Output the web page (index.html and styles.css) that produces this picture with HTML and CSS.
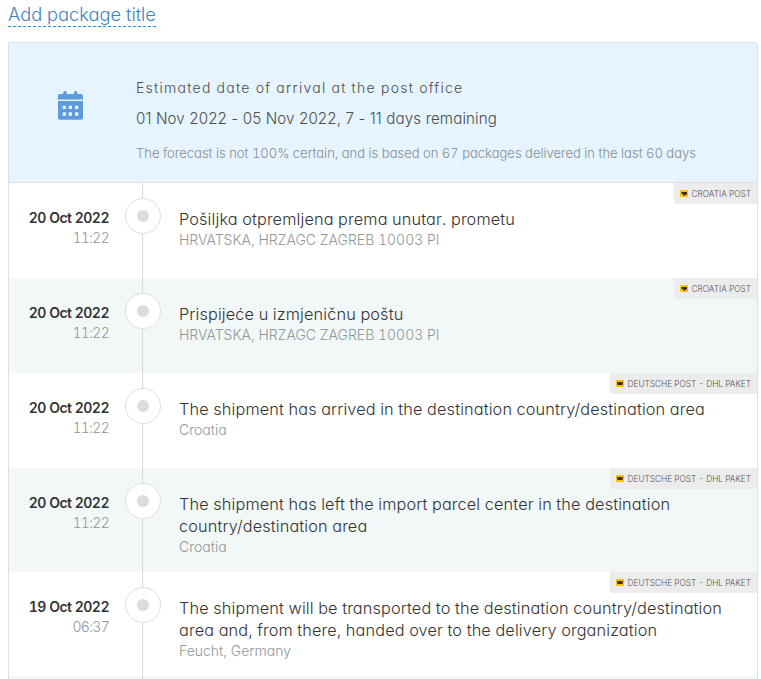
FILE: index.html
```html
<!DOCTYPE html>
<html lang="en">
<head>
<meta charset="utf-8">
<title>Package tracking</title>
<link rel="stylesheet" href="styles.css">
</head>
<body>
<h1 class="title"><span class="title-link">Add package title</span></h1>
<div class="card">
  <section class="forecast">
    <div class="forecast-icon">
      <svg width="25" height="29" viewBox="0 0 25 29"><path fill="#5f9ade" d="M5.300 1.500a1.700 1.500 0 0 1 3.400 0V3h7.300V1.500a1.700 1.500 0 0 1 3.400 0V3H23a2 2 0 0 1 2 2v3.500H0V5a2 2 0 0 1 2-2h3.300zM0 10h25v16.800a2 2 0 0 1-2 2H2a2 2 0 0 1-2-2z"/><path fill="#e5f4fe" d="M4.700 14.700H8V18H4.700zM10.700 14.700H14V18h-3.300zM17 14.700h3.300V18H17zM4.700 21.300H8v3.400H4.700zM10.700 21.300H14v3.400h-3.300zM17 21.300h3.300v3.400H17z"/></svg>
    </div>
    <div class="forecast-text">
      <p class="forecast-head">Estimated date of arrival at the post office</p>
      <p class="forecast-range">01 Nov 2022 - 05 Nov 2022, 7 - 11 days remaining</p>
      <p class="forecast-note">The forecast is not 100% certain, and is based on 67 packages delivered in the last 60 days</p>
    </div>
  </section>
  <div class="timeline">
    <article class="event">
      <div class="when"><div class="date">20 Oct 2022</div><div class="time">11:22</div></div>
      <div class="dot"></div>
      <div class="what"><div class="status">Pošiljka otpremljena prema unutar. prometu</div><div class="place">HRVATSKA, HRZAGC ZAGREB 10003 PI</div></div>
      <div class="carrier"><svg class="post-logo" width="8" height="7" viewBox="0 0 8 7"><rect width="8" height="7" fill="#fcc30b"/><path fill="#3a2c10" d="M1.500 2h5.500v2.500H5.500V5.500H3V4H1.500z"/></svg>CROATIA POST</div>
    </article>
    <article class="event">
      <div class="when"><div class="date">20 Oct 2022</div><div class="time">11:22</div></div>
      <div class="dot"></div>
      <div class="what"><div class="status">Prispijeće u izmjeničnu poštu</div><div class="place">HRVATSKA, HRZAGC ZAGREB 10003 PI</div></div>
      <div class="carrier"><svg class="post-logo" width="8" height="7" viewBox="0 0 8 7"><rect width="8" height="7" fill="#fcc30b"/><path fill="#3a2c10" d="M1.500 2h5.500v2.500H5.500V5.500H3V4H1.500z"/></svg>CROATIA POST</div>
    </article>
    <article class="event">
      <div class="when"><div class="date">20 Oct 2022</div><div class="time">11:22</div></div>
      <div class="dot"></div>
      <div class="what"><div class="status">The shipment has arrived in the destination country/destination area</div><div class="place">Croatia</div></div>
      <div class="carrier"><svg class="post-logo" width="8" height="7" viewBox="0 0 8 7"><rect width="8" height="7" fill="#fcc30b"/><path fill="#3a2c10" d="M1 1.500L2.500 2.500 4 1.500 5.500 2.500 7 1.500 6.500 5H1.500z"/></svg>DEUTSCHE POST - DHL PAKET</div>
    </article>
    <article class="event">
      <div class="when"><div class="date">20 Oct 2022</div><div class="time">11:22</div></div>
      <div class="dot"></div>
      <div class="what"><div class="status">The shipment has left the import parcel center in the destination country/destination area</div><div class="place">Croatia</div></div>
      <div class="carrier"><svg class="post-logo" width="8" height="7" viewBox="0 0 8 7"><rect width="8" height="7" fill="#fcc30b"/><path fill="#3a2c10" d="M1 1.500L2.500 2.500 4 1.500 5.500 2.500 7 1.500 6.500 5H1.500z"/></svg>DEUTSCHE POST - DHL PAKET</div>
    </article>
    <article class="event">
      <div class="when"><div class="date">19 Oct 2022</div><div class="time">06:37</div></div>
      <div class="dot"></div>
      <div class="what"><div class="status">The shipment will be transported to the destination country/destination area and, from there, handed over to the delivery organization</div><div class="place">Feucht, Germany</div></div>
      <div class="carrier"><svg class="post-logo" width="8" height="7" viewBox="0 0 8 7"><rect width="8" height="7" fill="#fcc30b"/><path fill="#3a2c10" d="M1 1.500L2.500 2.500 4 1.500 5.500 2.500 7 1.500 6.500 5H1.500z"/></svg>DEUTSCHE POST - DHL PAKET</div>
    </article>
    <article class="event"></article>
  </div>
</div>
</body>
</html>
```
FILE: styles.css
```css
html, body { height: 100%; overflow: hidden; }
body { margin: 0; padding: 0 3px 0 8px; background: #fff; font-family: Inter, "Noto Sans", sans-serif; font-feature-settings: "cv11", "tnum"; color: #444; }
p { margin: 0; }
.title { margin: 0; height: 42px; font-size: 18.250px; font-weight: 300; line-height: 23px; padding-top: 3px; box-sizing: border-box; color: #3f82c4; }
.title-link { display: inline-block; height: 23px; border-bottom: 1px dashed #0c9ae0; }
.card { border: 1px solid #dfdfdf; border-bottom: 0; border-radius: 3px 3px 0 0; overflow: hidden; height: 700px; }
.forecast { display: flex; height: 139px; background: #e5f4fe; border-bottom: 1px solid #dfdfdf; box-sizing: content-box; }
.forecast-icon { width: 127px; display: flex; justify-content: center; align-items: flex-start; padding-top: 48px; padding-right: 4px; box-sizing: border-box; }
.forecast-text { padding-top: 35px; }
.forecast-head { font-size: 14px; font-weight: 350; line-height: 20px; letter-spacing: 1.260px; color: #4d4d4d; }
.forecast-range { font-size: 15.150px; font-weight: 350; line-height: 20px; margin-top: 11px; letter-spacing: 0.120px; font-feature-settings: "cv11"; color: #4d4d4d; }
.forecast-note { font-size: 13px; font-weight: 350; line-height: 18px; margin-top: 15px; color: #878d94; }
.timeline { background: linear-gradient(#d9d9d9, #d9d9d9) 133px 0 / 1px 100% no-repeat; }
.event { position: relative; display: flex; min-height: 95px; box-sizing: border-box; padding: 25px 30px 0 0; }
.event:nth-child(even) { background: linear-gradient(#d9d9d9, #d9d9d9) 133px 0 / 1px 100% no-repeat, #f2f7f8; }
.when { width: 100px; text-align: right; }
.date { font-size: 14px; font-weight: 600; line-height: 20px; letter-spacing: -0.500px; color: #333; }
.time { font-size: 14px; font-weight: 300; line-height: 20px; letter-spacing: -0.700px; color: #8f979a; }
.dot { position: absolute; left: 116px; top: 15px; width: 36px; height: 36px; box-sizing: border-box; border: 1px solid #dfdfdf; border-radius: 50%; background: #fff; display: flex; align-items: center; justify-content: center; }
.dot::after { content: ""; width: 12px; height: 12px; border-radius: 50%; background: #dcdcdc; }
.what { margin-left: 70px; flex: 1; padding-bottom: 15px; }
.status { font-size: 16.300px; font-weight: 350; line-height: 22px; letter-spacing: 0.130px; color: #333; }
.place { font-size: 14px; font-weight: 300; line-height: 20px; color: #8f979a; }
.carrier { position: absolute; top: 0; right: 0; height: 21px; padding: 0 6px; display: flex; align-items: center; gap: 3px; background: #ececec; border-bottom-left-radius: 4px; font-size: 8.300px; font-weight: 350; color: #555; }
.post-logo { flex: none; }
```
